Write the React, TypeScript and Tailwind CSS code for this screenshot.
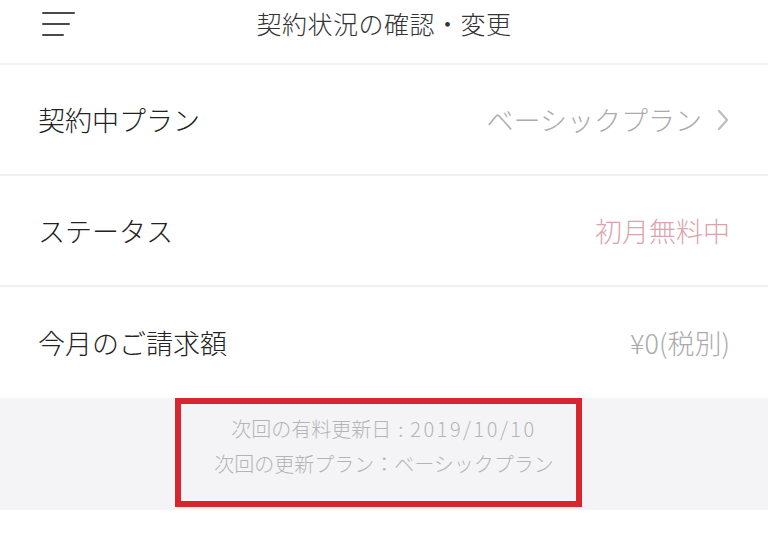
import React from 'react';

const font = { fontFamily: '"Noto Sans CJK JP", "Noto Sans", sans-serif' };

const rows = [
  { label: '契約中プラン', value: 'ベーシックプラン', tone: 'text-[#ababab]', chevron: true },
  { label: 'ステータス', value: '初月無料中', tone: 'text-[#dba3ab]', chevron: false },
  { label: '今月のご請求額', value: '¥0(税別)', tone: 'text-[#ababab]', chevron: false },
];

const MenuIcon = () => (
  <svg width="34" height="26" viewBox="0 0 34 26" className="text-[#4a4a4a]">
    <path d="M1 2h31M1 13h26M1 24h20" stroke="currentColor" strokeWidth="2" strokeLinecap="round" />
  </svg>
);

const Chevron = () => (
  <svg width="14" height="24" viewBox="0 0 14 24" className="text-[#bdbdbd]">
    <path d="M3 3l8 9-8 9" fill="none" stroke="currentColor" strokeWidth="2.2" strokeLinecap="round" strokeLinejoin="round" />
  </svg>
);

const App = () => {
  return (
    <div className="w-[768px] h-[533px] bg-white overflow-hidden" style={font}>
      {/* Header */}
      <header className="relative h-[65px] flex items-start justify-center border-b-2 border-[#f2f2f2]">
        <div className="absolute left-[42px] top-[11px]">
          <MenuIcon />
        </div>
        <h1 className="mt-[5px] text-[25px] leading-[36px] text-[#333] font-light tracking-[0.5px]">契約状況の確認・変更</h1>
      </header>

      {/* Rows */}
      {rows.map((row, i) => (
        <div
          key={i}
          className={`h-[111px] flex items-center justify-between pl-[38px] pr-[38px] ${i < rows.length - 1 ? 'border-b-2 border-[#f0f0f0]' : ''}`}
        >
          <span className="text-[27px] text-[#222] font-light leading-none">{row.label}</span>
          <span className={`flex items-center gap-[14px] text-[27px] font-light leading-none ${row.tone}`}>
            {row.value}
            {row.chevron && <Chevron />}
          </span>
        </div>
      ))}

      {/* Footer note */}
      <div className="bg-[#f4f4f6] h-[112px] flex justify-center">
        <div className="mr-[12px] w-[407px] h-[109px] border-[6px] border-[#d6262e] pt-[7px] pl-[12px] text-center text-[20px] leading-[35px] text-[#b4b4b4] font-light">
          <p>
            次回の有料更新日<span className="mx-[7px]">:</span><span className="tracking-[2.5px]">2019/10/10</span>
          </p>
          <p>次回の更新プラン：ベーシックプラン</p>
        </div>
      </div>
    </div>
  );
};

export default App;
